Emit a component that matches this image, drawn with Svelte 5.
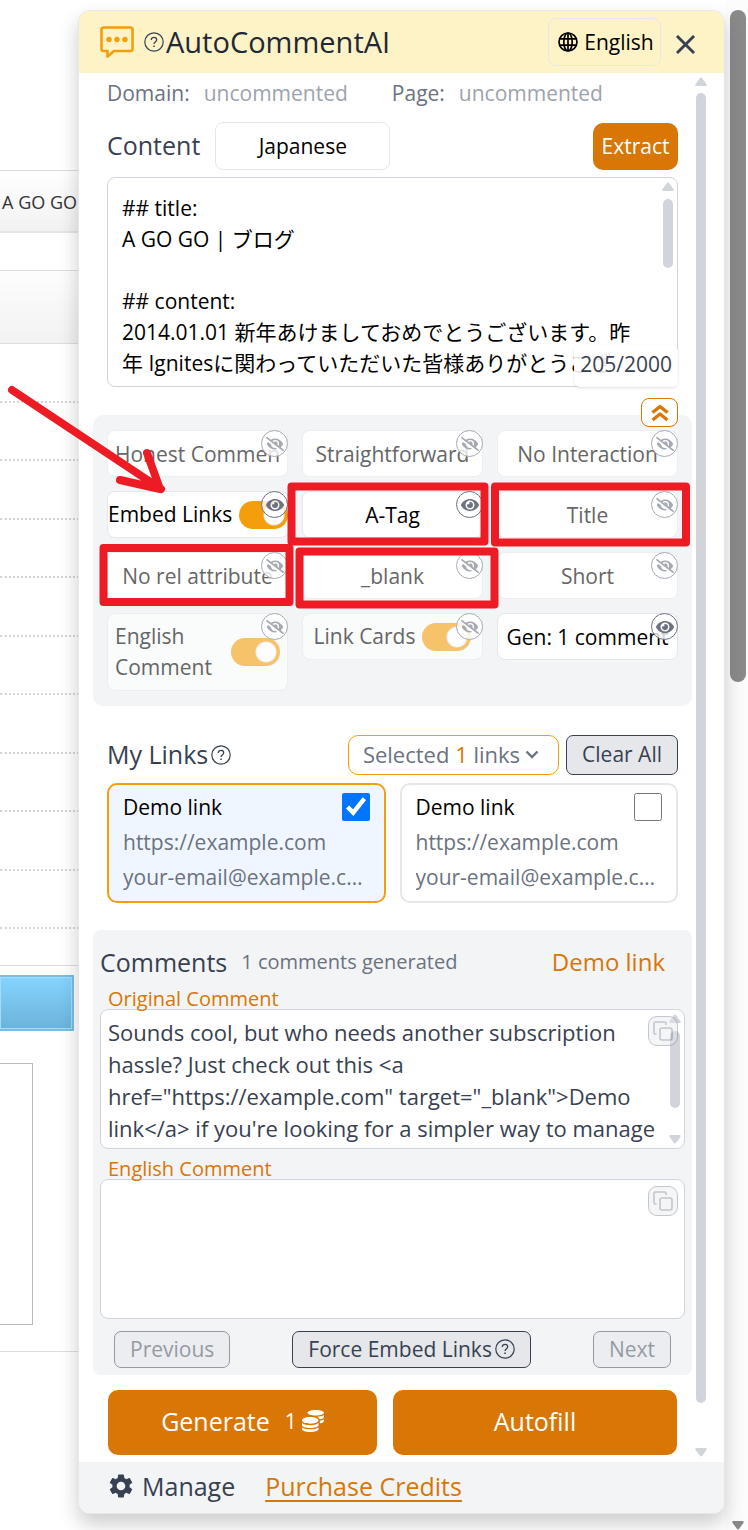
<script>
  const EYE =
    'M572.52 241.4C518.29 135.59 410.93 64 288 64S57.68 135.64 3.48 241.41a32.35 32.35 0 0 0 0 29.19C57.71 376.41 165.07 448 288 448s230.32-71.64 284.52-177.41a32.35 32.35 0 0 0 0-29.19zM288 400a144 144 0 1 1 144-144 143.93 143.93 0 0 1-144 144zm0-240a95.31 95.31 0 0 0-25.31 3.79 47.85 47.85 0 0 1-66.9 66.9A95.78 95.78 0 1 0 288 160z';
  const EYE_OFF =
    'M320 400c-75.85 0-137.25-58.71-142.9-133.11L72.2 185.82c-13.79 17.3-26.48 35.59-36.72 55.59a32.35 32.35 0 0 0 0 29.19C89.71 376.41 197.07 448 320 448c26.91 0 52.87-4 77.89-10.46L346 397.39a144.13 144.13 0 0 1-26 2.61zm313.82 58.1l-110.55-85.44a331.25 331.25 0 0 0 81.25-102.07 32.35 32.35 0 0 0 0-29.19C550.29 135.59 442.93 64 320 64a308.15 308.15 0 0 0-147.32 37.7L45.46 3.37A16 16 0 0 0 23 6.18L3.37 31.45A16 16 0 0 0 6.18 53.9l588.36 454.73a16 16 0 0 0 22.46-2.81l19.64-25.27a16 16 0 0 0-2.82-22.45zm-183.72-142l-39.3-30.38A94.75 94.75 0 0 0 416 256a94.76 94.76 0 0 0-121.31-92.21A47.65 47.65 0 0 1 304 192a46.64 46.64 0 0 1-1.54 10l-73.61-56.89A142.31 142.31 0 0 1 320 112a143.92 143.92 0 0 1 144 144c0 21.63-5.29 41.79-13.9 60.11z';

  let options = $state([
    { label: 'Honest Comments', kind: 'select', on: false },
    { label: 'Straightforward', kind: 'select', on: false },
    { label: 'No Interaction', kind: 'select', on: false },
    { label: 'Embed Links', kind: 'switch', on: true, checked: true, tight: true },
    { label: 'A-Tag', kind: 'select', on: true },
    { label: 'Title', kind: 'select', on: false },
    { label: 'No rel attribute', kind: 'select', on: false },
    { label: '_blank', kind: 'select', on: false },
    { label: 'Short', kind: 'select', on: false },
    { label: 'English Comment', kind: 'switch', on: false, checked: true },
    { label: 'Link Cards', kind: 'switch', on: false, checked: true },
    { label: 'Gen: 1 comment', kind: 'select', on: true }
  ]);

  let links = $state([
    { name: 'Demo link', url: 'https://example.com', email: 'your-email@example.com', selected: true },
    { name: 'Demo link', url: 'https://example.com', email: 'your-email@example.com', selected: false }
  ]);

  let selectedCount = $derived(links.filter((l) => l.selected).length);

  let content = $state(
    '## title:\nA GO GO | ブログ\n\n## content:\n2014.01.01 新年あけましておめでとうございます。昨年 Ignitesに関わっていただいた皆様ありがとうござ'
  );
  let original = $state(
    'Sounds cool, but who needs another subscription hassle? Just check out this <a href="https://example.com" target="_blank">Demo link</a> if you\'re looking for a simpler way to manage'
  );
  let english = $state('');

  function clearAll() {
    for (const l of links) l.selected = false;
  }
</script>

{#snippet help()}
  <svg class="help" viewBox="0 0 20 20" fill="none" stroke="currentColor" aria-hidden="true">
    <circle cx="10" cy="10" r="9.2" stroke-width="1.2" />
    <path d="M7.3 8c0-1.6 1.2-2.7 2.7-2.7s2.7 1 2.7 2.5c0 2-2.7 2.2-2.7 4.2" stroke-width="1.3" />
    <path d="M10 13.6v1.5" stroke-width="1.5" />
  </svg>
{/snippet}

{#snippet copy()}
  <svg viewBox="0 0 22 22" fill="none" stroke="currentColor" stroke-width="1.6" aria-hidden="true">
    <rect x="8" y="8" width="12" height="12" rx="2" />
    <path d="M4.5 14H3.5a1.5 1.5 0 0 1-1.5-1.5v-9A1.5 1.5 0 0 1 3.5 2h9A1.5 1.5 0 0 1 14 3.5v1.500" />
  </svg>
{/snippet}

{#snippet arrow(down)}
  <svg class="tri" class:down viewBox="0 0 12 9" aria-hidden="true">
    <path d="M6 0.5C6.5 0.5 7 1 7.5 1.8L11.4 7c.7 1 .2 2-.9 2h-9C.4 9-.1 8 .6 7l3.9-5.2C5 1 5.5.5 6 .5z" fill="currentColor" />
  </svg>
{/snippet}

<div class="page">
  <div class="site">
    <div class="blank"></div>
    <div class="crumb">A GO GO</div>
    <div class="strip"></div>
    <div class="band"></div>
    {#each Array(10) as _}
      <div class="entry"></div>
    {/each}
    <div class="last"></div>
    <div class="submit"></div>
    <div class="box"></div>
    <div class="end"></div>
  </div>

  <main class="panel">
    <header>
      <svg class="logo" viewBox="0 0 34 32" fill="none" aria-hidden="true">
        <path d="M3.5 1.500h27a2 2 0 0 1 2 2v19.500a2 2 0 0 1-2 2H14L7.500 30.500V25h-4a2 2 0 0 1-2-2V3.500a2 2 0 0 1 2-2z" stroke="#f59e0b" stroke-width="2.600" stroke-linejoin="round" />
        <g fill="#f59e0b"><circle cx="9" cy="13.500" r="2.700" /><circle cx="17" cy="13.500" r="2.700" /><circle cx="25" cy="13.500" r="2.700" /></g>
      </svg>
      {@render help()}
      <h1>AutoCommentAI</h1>
      <label class="lang">
        <svg viewBox="0 0 20 20" fill="none" stroke="#000" stroke-width="1.700" aria-hidden="true">
          <circle cx="10" cy="10" r="9" />
          <ellipse cx="10" cy="10" rx="4.200" ry="9" />
          <path d="M10 1v18M1.800 6.800h16.400M1.800 13.200h16.400" />
        </svg>
        <select aria-label="Interface language"><option>English</option></select>
      </label>
      <button class="close" aria-label="Close">
        <svg viewBox="0 0 20 20" fill="none" stroke="currentColor" stroke-width="3"><path d="M1 1l18 18M19 1L1 19" /></svg>
      </button>
    </header>

    <div class="body">
      <div class="content">
        <div class="meta">
          <span>Domain:</span><em>uncommented</em>
          <span class="second">Page:</span><em>uncommented</em>
        </div>

        <div class="row">
          <label class="heading" for="content">Content</label>
          <select class="source" aria-label="Content language"><option>Japanese</option></select>
          <button class="extract">Extract</button>
        </div>

        <div class="field source-text">
          <textarea id="content" bind:value={content}></textarea>
          <div class="bar" aria-hidden="true">{@render arrow(false)}<i></i></div>
          <span class="count">205/2000</span>
        </div>

        <section class="options">
          <button class="fold" aria-label="Collapse options">
            <svg viewBox="0 0 18 18" fill="none" stroke="currentColor" stroke-width="3.400" aria-hidden="true">
              <path d="M1.500 8.500L9 2.500l7.500 6M1.500 16L9 10l7.500 6" stroke-linejoin="round" />
            </svg>
          </button>
          {#each options as o}
            <div class="option">
              {#if o.kind === 'select'}
                <select class:off={!o.on} aria-label={o.label}><option>{o.label}</option></select>
              {:else}
                <label class="toggle" class:off={!o.on} class:tight={o.tight}>
                  <span>{o.label}</span>
                  <input type="checkbox" role="switch" bind:checked={o.checked} />
                </label>
              {/if}
              <button class="eye" class:hidden={!o.on} aria-label={`Show ${o.label}`} aria-pressed={o.on} onclick={() => (o.on = !o.on)}>
                {#if o.on}
                  <svg viewBox="0 0 576 512" fill="currentColor"><path d={EYE} /></svg>
                {:else}
                  <svg viewBox="0 0 640 512" fill="currentColor"><path d={EYE_OFF} /></svg>
                {/if}
              </button>
            </div>
          {/each}
        </section>

        <div class="row links-head">
          <h2 class="heading">My Links</h2>
          {@render help()}
          <button class="picker">
            <span>Selected <b>{selectedCount}</b> links</span>
            <svg viewBox="0 0 14 9" fill="none" stroke="currentColor" stroke-width="2.400" aria-hidden="true"><path d="M1.500 1.500L7 7l5.500-5.500" /></svg>
          </button>
          <button class="grey" onclick={clearAll}>Clear All</button>
        </div>

        <div class="cards">
          {#each links as l}
            <label class="card" class:selected={l.selected}>
              <span class="name">{l.name}</span>
              <input type="checkbox" bind:checked={l.selected} />
              <span class="line">{l.url}</span>
              <span class="line">{l.email}</span>
            </label>
          {/each}
        </div>

        <section class="comments">
          <div class="comments-head">
            <h2 class="heading">Comments</h2>
            <span class="generated">1 comments generated</span>
            <a class="demo" href="#demo">Demo link</a>
          </div>
          <label class="caption" for="original">Original Comment</label>
          <div class="field comment">
            <textarea id="original" bind:value={original}></textarea>
            <div class="bar" aria-hidden="true">{@render arrow(false)}<i></i>{@render arrow(true)}</div>
            <button class="copy" aria-label="Copy original comment">{@render copy()}</button>
          </div>
          <label class="caption" for="english">English Comment</label>
          <div class="field comment">
            <textarea id="english" bind:value={english}></textarea>
            <button class="copy" aria-label="Copy English comment">{@render copy()}</button>
          </div>
          <div class="pager">
            <button class="grey" disabled>Previous</button>
            <button class="grey">Force Embed Links{@render help()}</button>
            <button class="grey" disabled>Next</button>
          </div>
        </section>

        <div class="actions">
          <button>
            Generate
            <small>1</small>
            <svg viewBox="0 0 512 512" fill="currentColor" aria-hidden="true"><path d="M0 405.300V448c0 35.300 86 64 192 64s192-28.700 192-64v-42.700C342.700 434.400 267.200 448 192 448S41.300 434.400 0 405.300zM320 128c106 0 192-28.700 192-64S426 0 320 0 128 28.700 128 64s86 64 192 64zM0 300.400V352c0 35.300 86 64 192 64s192-28.700 192-64v-51.600c-41.300 34-116.900 51.600-192 51.600S41.300 334.400 0 300.400zm416 11c57.300-11.100 96-31.700 96-55.400v-42.700c-23.200 16.400-57.300 27.600-96 34.500v63.600zM192 160C86 160 0 195.800 0 240s86 80 192 80 192-35.800 192-80-86-80-192-80zm219.300 56.300c60-10.800 100.700-32 100.700-56.300v-42.700c-35.500 25.100-96.500 38.600-160.700 41.800 29.500 14.300 51.200 33.500 60 57.200z" /></svg>
          </button>
          <button>Autofill</button>
        </div>
      </div>
      <div class="bar main-bar" aria-hidden="true">{@render arrow(false)}<i></i>{@render arrow(true)}</div>
    </div>

    <footer>
      <button class="manage">
        <svg viewBox="2 2 20 20" fill="currentColor" aria-hidden="true"><path d="M19.140 12.940c.04-.3.06-.61.06-.94 0-.32-.02-.64-.07-.94l2.030-1.580c.18-.14.23-.41.12-.61l-1.920-3.320c-.12-.22-.37-.29-.59-.22l-2.390.96c-.5-.38-1.030-.7-1.620-.94l-.36-2.540c-.04-.24-.24-.41-.48-.41h-3.840c-.24 0-.43.17-.47.41l-.36 2.540c-.59.24-1.130.57-1.620.94l-2.390-.96c-.22-.08-.47 0-.59.22L2.740 8.870c-.12.21-.08.47.12.61l2.030 1.580c-.05.3-.09.63-.09.94s.02.64.07.94l-2.030 1.580c-.18.14-.23.41-.12.61l1.920 3.320c.12.22.37.29.59.22l2.390-.96c.5.38 1.030.7 1.620.94l.36 2.540c.05.24.24.41.48.41h3.840c.24 0 .44-.17.47-.41l.36-2.540c.59-.24 1.130-.56 1.620-.94l2.390.96c.22.08.47 0 .59-.22l1.920-3.320c.12-.22.07-.47-.12-.61l-2.010-1.580zM12 15.600A3.600 3.600 0 1 1 12 8.400a3.600 3.600 0 0 1 0 7.200z" /></svg>
        Manage
      </button>
      <a href="#credits">Purchase Credits</a>
    </footer>
  </main>

  <div class="window-bar" aria-hidden="true"><i></i>{@render arrow(true)}</div>

  <svg class="marks" viewBox="0 0 748 700" width="748" height="700" fill="none" stroke="#ed1c24" stroke-width="8" stroke-linejoin="round" aria-hidden="true">
    <path d="M12 390L161 489M147 453L160 489L120 480" stroke-linecap="round" />
    <rect x="291.500" y="486.500" width="193" height="55" />
    <rect x="495" y="486.500" width="191" height="56" />
    <rect x="103.500" y="548" width="186" height="54" />
    <rect x="299.500" y="551.500" width="195" height="53" />
  </svg>
</div>

<style>
  :global(body) { background: #fff; }

  .page {
    position: relative;
    display: grid;
    grid-template-columns: 79px minmax(0, 1fr) 23px;
    min-height: 100vh;
    overflow: hidden;
    font-family: "Open Sans", "Noto Sans CJK JP", sans-serif;
    font-size: 21px;
    line-height: 32px;
    color: #374151;
  }
  .page * { box-sizing: border-box; }
  h1, h2 { margin: 0; font-weight: 400; }
  button, select, textarea, input { font: inherit; color: inherit; margin: 0; }
  button { padding: 0; cursor: pointer; }
  select { appearance: none; background: #fff; border: 1px solid #e5e7eb; border-radius: 8px; text-align: center; text-align-last: center; }
  svg { flex: none; display: block; }

  /* Site behind the panel */
  .site { display: flex; flex-direction: column; overflow: hidden; }
  .blank { height: 171px; border-bottom: 1px solid #ddd; }
  .crumb {
    display: flex;
    justify-content: flex-end;
    height: 62px;
    padding-right: 2px;
    line-height: 62px;
    font-size: 18px;
    white-space: nowrap;
    color: #333;
    background: linear-gradient(#fff, #f2f2f2);
    border-bottom: 2px solid #e5e5e5;
  }
  .strip { height: 38px; border-bottom: 1px solid #ddd; }
  .band { height: 73px; background: linear-gradient(#fdfdfd, #f2f2f2); border-bottom: 1px solid #ddd; }
  .entry { height: 58px; border-bottom: 2px dotted #d4d4d4; }
  .entry:nth-child(odd) { height: 59px; }
  .last { height: 37px; border-bottom: 1px solid #ddd; }
  .submit { height: 56px; margin: 9px 5px 32px 0; border: 2px solid #75bfe6; border-left: 0; box-shadow: inset 0 0 0 1px #a5dbf7; background: linear-gradient(#85d4ff, #6bb3da); }
  .box { height: 262px; margin-right: 46px; border: 1px solid #bbb; border-left: 0; }
  .end { height: 27px; border-bottom: 1px solid #ddd; }

  /* Panel */
  .panel {
    position: relative;
    z-index: 1;
    display: flex;
    flex-direction: column;
    margin: 10px 0 16px -1px;
    border: 1px solid #e5e7eb;
    border-radius: 12px;
    background: #fff;
    box-shadow: 0 10px 20px rgba(0, 0, 0, 0.2);
  }
  header {
    display: flex;
    align-items: center;
    height: 62px;
    padding: 0 29px 0 21px;
    background: #fef3c7;
    border-radius: 11px 11px 0 0;
  }
  .logo { width: 34px; height: 32px; margin-right: 10px; }
  .help { width: 20px; height: 20px; }
  header .help { margin-right: 2px; }
  h1 { font-size: 29px; color: #1f2937; margin-right: auto; }
  .lang { display: flex; align-items: center; height: 48px; padding: 0 6px 0 9px; gap: 6px; border: 1px solid #e5e7eb; border-radius: 8px; color: #000; }
  .lang svg { width: 20px; height: 20px; }
  .lang select { border: 0; padding: 0; background: transparent; }
  .close { display: flex; border: 0; background: none; margin: 5px 0 0 15px; }
  .close svg { width: 19px; height: 19px; }

  .body { display: flex; flex: 1; }
  .content { flex: 1; min-width: 0; padding: 4px 0 6px 14px; }
  .meta { display: flex; padding: 0 14px; color: #6b7280; }
  .meta em { font-style: normal; color: #9ca3af; margin-left: 14px; }
  .meta .second { margin-left: 44px; }
  .row { display: flex; align-items: center; padding: 0 14px; margin-top: 13px; }
  .heading { font-size: 25px; line-height: 32px; }
  .row .heading { padding-bottom: 3px; }
  .source { width: 175px; height: 48px; margin: 0 auto 0 15px; color: #000; }
  .extract { width: 85px; height: 47px; border: 0; border-radius: 10px; background: #d97706; color: #fff; font-weight: 500; }

  .field { position: relative; display: flex; }
  textarea { flex: 1; min-width: 0; resize: none; overflow: hidden; border: 1px solid #d1d5db; border-radius: 8px; background: #fff; }
  .source-text { margin: 7px 14px 28px; height: 210px; }
  .source-text textarea { padding: 15px 32px 0 14px; color: #000; line-height: 31px; }
  .count {
    position: absolute;
    right: 0;
    bottom: 0;
    height: 42px;
    line-height: 38px;
    padding: 0 6px;
    background: rgba(255, 255, 255, 0.9);
    border-radius: 6px;
    box-shadow: 0 1px 3px rgba(0, 0, 0, 0.12);
  }

  .bar { display: flex; flex-direction: column; align-items: center; width: 12px; color: #d1d5db; }
  .tri { width: 12px; height: 9px; }
  .tri.down { transform: rotate(180deg); }
  .bar i { width: 10px; border-radius: 5px; background: #d1d5db; }
  .field .bar { position: absolute; right: 4px; top: 5px; bottom: 5px; }
  .source-text .bar i { height: 69px; margin-top: 8px; }
  .comment .bar i { height: 77px; margin: 8px 0 auto; }
  .main-bar { margin: 4px 17px 5px 3px; }
  .main-bar i { flex: 1; margin: 7px 0 45px; }

  .options {
    position: relative;
    display: grid;
    grid-template-columns: repeat(3, minmax(0, 1fr));
    align-items: start;
    gap: 14px;
    padding: 15px 14px;
    background: #f3f4f6;
    border-radius: 10px;
  }
  .fold {
    position: absolute;
    z-index: 1;
    right: 14px;
    top: -17px;
    width: 37px;
    height: 29px;
    display: grid;
    place-items: center;
    border: 1px solid #d97706;
    border-radius: 8px;
    background: #fff;
    color: #d97706;
  }
  .fold svg { width: 18px; height: 18px; }
  .option { position: relative; display: flex; }
  .option select { width: 100%; height: 47px; padding: 0 7px; color: #000; }
  .option select.off { border-color: #eceef0; color: #666; }
  .toggle {
    flex: 1;
    display: flex;
    align-items: center;
    justify-content: center;
    gap: 7px;
    min-height: 47px;
    padding: 7px;
    border: 1px solid #e5e7eb;
    border-radius: 8px;
    background: #fff;
    color: #000;
    line-height: 31px;
  }
  .toggle.off { border-color: #eceef0; background: #fafbfb; color: #666; }
  .toggle.off input { opacity: 0.6; }
  .toggle span { min-width: 0; }
  .toggle.tight { padding: 7px 0; white-space: nowrap; }
  .toggle input {
    appearance: none;
    flex: none;
    width: 49px;
    height: 28px;
    border-radius: 14px;
    background: radial-gradient(circle at 35px 14px, #fff 9px, #e5e7eb 10px, transparent 11px) #f59e0b;
  }
  .toggle input:not(:checked) { background: radial-gradient(circle at 14px 14px, #fff 9px, #e5e7eb 10px, transparent 11px) #d1d5db; }
  .eye {
    position: absolute;
    top: 0;
    right: 0;
    width: 27px;
    height: 27px;
    display: grid;
    place-items: center;
    border: 1px solid #6b7280;
    border-radius: 50%;
    background: rgba(255, 255, 255, 0.8);
    color: #6b7280;
  }
  .eye.hidden { border-color: #a6aab3; color: #a6aab3; }
  .eye svg { width: 18px; height: 16px; }

  .links-head { margin-top: 29px; }
  .links-head .help { margin: 0 auto 0 3px; }
  .picker { display: flex; align-items: center; gap: 5px; height: 40px; padding: 0 19px 2px 14px; border: 1px solid #f59e0b; border-radius: 10px; background: #fff; color: #6b7280; font-size: 22px; }
  .picker b { font-weight: 500; color: #d97706; }
  .picker svg { width: 14px; height: 9px; }
  .grey { display: flex; align-items: center; justify-content: center; height: 37px; padding: 0 15px 2px; border: 1px solid #374151; border-radius: 7px; background: #e5e7eb; }
  .links-head .grey { height: 40px; margin-left: 7px; }

  .cards { display: grid; grid-template-columns: repeat(2, minmax(0, 1fr)); gap: 14px; padding: 8px 14px 27px; }
  .card {
    display: grid;
    grid-template-columns: minmax(0, 1fr) 28px;
    grid-auto-rows: 35px;
    align-items: center;
    height: 120px;
    padding: 4px 14px 0;
    border: 2px solid #e5e7eb;
    border-radius: 10px;
    color: #6b7280;
  }
  .card.selected { border-color: #f59e0b; background: #eff6ff; }
  .card .name { color: #000; }
  .card input { width: 28px; height: 28px; }
  .card .line { grid-column: 1 / -1; overflow: hidden; white-space: nowrap; text-overflow: ellipsis; }

  .comments { padding: 16px 7px 7px; border-radius: 8px; background: #f3f4f6; }
  .comments-head { display: flex; align-items: center; }
  .generated { margin: 0 auto 0 14px; font-size: 20px; color: #6b7280; }
  .demo { margin-right: 20px; font-size: 24px; color: #d97706; text-decoration: none; }
  .caption { position: relative; z-index: 1; display: block; height: 31px; padding: 5px 8px 0; font-size: 20px; color: #d97706; }
  .comment { height: 140px; }
  .comment + .caption { height: 30px; padding-top: 4px; }
  .comment textarea { padding: 6px 25px 0 7px; font-size: 22px; }
  .copy {
    position: absolute;
    right: 7px;
    top: 7px;
    width: 30px;
    height: 30px;
    display: grid;
    place-items: center;
    border: 1px solid #6b7280;
    border-radius: 9px;
    background: #e5e7eb;
    color: #6b7280;
    opacity: 0.4;
  }
  .copy svg { width: 22px; height: 22px; }
  .pager { display: flex; justify-content: space-between; padding: 12px 14px 0; }
  .pager .help { margin-left: 3px; }
  .pager .grey:disabled { opacity: 0.5; }

  .actions { display: grid; grid-template-columns: 269fr 284fr; gap: 16px; padding: 15px 15px 0; }
  .actions button { display: flex; align-items: center; justify-content: center; height: 65px; padding-bottom: 3px; border: 0; border-radius: 10px; background: #d97706; color: #fff; font-size: 25px; font-weight: 500; }
  .actions small { margin: 0 5px 0 15px; font-size: 21px; }
  .actions svg { width: 22px; height: 22px; }

  footer { display: flex; align-items: center; gap: 30px; height: 51px; padding: 0 30px 3px; background: #f3f4f6; border-radius: 0 0 11px 11px; font-size: 25px; }
  .manage { display: flex; align-items: center; gap: 9px; border: 0; background: none; }
  .manage svg { width: 24px; height: 24px; }
  footer a { color: #d97706; text-underline-offset: 4px; text-decoration-thickness: 2px; }

  .window-bar { display: flex; flex-direction: column; align-items: center; justify-content: space-between; padding: 10px 2px 0 5px; background: #fcfcfc; color: #8a8a8a; }
  .window-bar i { width: 16px; height: 672px; border-radius: 8px; background: #8a8a8a; }
  .window-bar .tri { width: 16px; height: 9px; }

  .marks { position: absolute; z-index: 2; left: 0; top: 0; pointer-events: none; }
</style>
